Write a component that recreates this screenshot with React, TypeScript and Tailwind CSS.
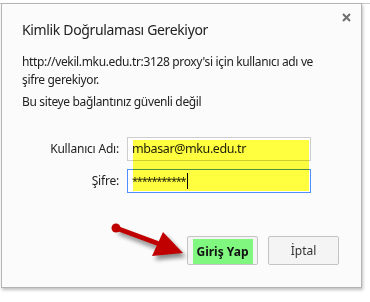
import React from "react";

export default function App() {
  const font = { fontFamily: '"Noto Sans", "Open Sans", sans-serif' };
  return (
    <div className="w-[370px] h-[302px] bg-white relative overflow-hidden" style={font}>
      <div className="h-px bg-[#c8c8c8] absolute left-0 right-0 top-[3px]" />
      <div className="absolute left-[1px] top-[3px] w-[361px] h-[285px] bg-[#fbfbfb] border border-[#b4b4b4] shadow-[1px_2px_3px_rgba(0,0,0,0.25)] flex flex-col">
        <div className="flex items-start justify-between pl-[20px] pr-[10px] pt-[11px]">
          <div className="text-[14px] leading-[22px] tracking-[-0.35px] text-[#222] mt-[4px]">Kimlik Doğrulaması Gerekiyor</div>
          <svg width="9" height="9" viewBox="0 0 9 9" className="mt-[-2px]">
            <path d="M1 1 L8 8 M8 1 L1 8" stroke="#6f6f6f" strokeWidth="2" />
          </svg>
        </div>
        <div className="pl-[20px] mt-[12px] text-[12px] leading-[18px] tracking-[-0.35px] text-[#222] whitespace-nowrap">
          http://vekil.mku.edu.tr:3128 proxy'si için kullanıcı adı ve
          <br />
          şifre gerekiyor.
        </div>
        <div className="pl-[20px] mt-[4px] text-[12px] leading-[18px] tracking-[-0.35px] text-[#222]">Bu siteye bağlantınız güvenli değil</div>
        <div className="grid grid-cols-[117px_184px] gap-x-[8px] gap-y-[8px] items-center mt-[26px] relative">
          <div className="text-right text-[12px] tracking-[-0.2px] text-[#222]">Kullanıcı Adı:</div>
          <div className="h-[24px] border border-[#cdcdcd] bg-white pl-[4px] flex items-center text-[12.5px] tracking-[-0.4px] text-[#222]">mbasar@mku.edu.tr</div>
          <div className="text-right text-[12px] tracking-[-0.2px] text-[#222]">Şifre:</div>
          <div className="h-[24px] border border-[#4d90fe] bg-white pl-[4px] flex items-center text-[11px] text-[#222]">
            <span className="tracking-[-1.2px]">***********</span>
            <span className="w-px h-[16px] bg-black ml-[2px]" />
          </div>
          <div className="absolute left-[131px] top-[3px] w-[176px] h-[51px] bg-[#ffff40] mix-blend-multiply" />
        </div>
        <div className="flex justify-end gap-[10px] mt-[43px] pr-[22px]">
          <div className="w-[71px] h-[29px] border border-[#c4c4c4] bg-[#f4f4f4] flex items-stretch justify-center rounded-[2px]">
            <div className="bg-[#80f880] w-[60px] mt-[2px] flex items-center justify-center text-[12px] font-bold text-[#111]">Giriş Yap</div>
          </div>
          <div className="w-[71px] h-[29px] border border-[#c4c4c4] bg-[#f4f4f4] flex items-center justify-center text-[12px] text-[#333] rounded-[2px]">İptal</div>
        </div>
      </div>
      <svg className="absolute left-0 top-0" width="370" height="302">
        <defs>
          <filter id="sh" x="-20%" y="-20%" width="140%" height="140%">
            <feGaussianBlur stdDeviation="2" />
          </filter>
        </defs>
        <g transform="translate(3,4)" filter="url(#sh)" opacity="0.45">
          <line x1="116" y1="228" x2="160" y2="245" stroke="#000" strokeWidth="5" />
          <polygon points="183,253 163,232 152,256" fill="#000" />
        </g>
        <line x1="116" y1="228" x2="162" y2="245" stroke="#c00000" strokeWidth="5" />
        <circle cx="116" cy="228" r="4.5" fill="#c00000" />
        <polygon points="183,253 163,232 152,256" fill="#c00000" />
      </svg>
    </div>
  );
}
